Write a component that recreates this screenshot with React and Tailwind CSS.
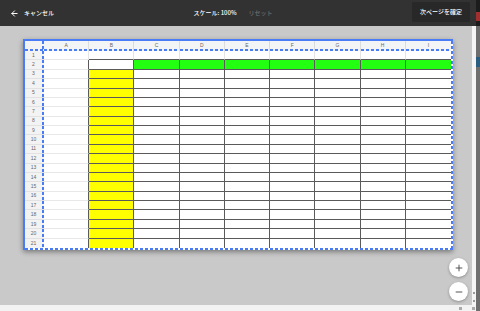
import { ArrowLeft, Plus, Minus } from 'lucide-react'

const COLS = ['A', 'B', 'C', 'D', 'E', 'F', 'G', 'H', 'I']
const ROWS = Array.from({ length: 21 }, (_, i) => i + 1)

const jp = { fontFamily: '"Noto Sans CJK JP", "Noto Sans", sans-serif' }
const small = { fontFamily: '"Liberation Sans", Arial, sans-serif' }

// blue page-break dashes, drawn as background strips
const dashH = 'bg-[image:repeating-linear-gradient(90deg,#4a7cf6_0_3px,transparent_3px_5px)] bg-[length:100%_2px] bg-bottom bg-no-repeat'
const dashV = 'bg-[image:repeating-linear-gradient(180deg,#4a7cf6_0_3px,transparent_3px_5px)] bg-[length:2px_100%] bg-right bg-no-repeat'

function cellClass(row, col) {
  // col: 0 = A, 1 = B ...
  const last = col === COLS.length - 1
  const lastRow = row === ROWS.length
  const dark = row >= 2 && col >= 1
  let cls = 'min-h-0 '
  if (row === 2 && col >= 2) cls += 'bg-[#22ff11] '
  else if (row >= 3 && col === 1) cls += 'bg-[#ffff00] '
  else cls += 'bg-white '

  if (!last) {
    if (dark || (col === 0 && row >= 2)) cls += 'border-r border-r-[#5a5a5a] '
    else cls += 'border-r border-r-[#e4e4e4] '
  }
  if (!lastRow) {
    if (dark || (row === 1 && col >= 1)) cls += 'border-b border-b-[#5a5a5a] '
    else cls += 'border-b border-b-[#e8e8e8] '
  }
  return cls
}

function Sheet() {
  return (
    <div className="h-[211px] w-[430px] border-l-2 border-t-2 border-[#4a7cf6] bg-white bg-[image:repeating-linear-gradient(180deg,#4a7cf6_0_3px,transparent_3px_5px),repeating-linear-gradient(90deg,#4a7cf6_0_3px,transparent_3px_5px)] bg-[length:2px_100%,100%_2px] bg-[position:right_top,left_bottom] bg-no-repeat pb-[2px] pr-[2px] shadow-[0_2px_5px_rgba(0,0,0,0.4)]">
      <div className="grid h-full w-full grid-cols-[19px_repeat(9,minmax(0,1fr))] grid-rows-[10px_repeat(21,minmax(0,1fr))]" style={small}>
        <div className="bg-[#f3f3f3] bg-[image:repeating-linear-gradient(90deg,#4a7cf6_0_3px,transparent_3px_5px),repeating-linear-gradient(180deg,#4a7cf6_0_3px,transparent_3px_5px)] bg-[length:100%_2px,2px_100%] bg-[position:left_bottom,right_top] bg-no-repeat" />
        {COLS.map((c, i) => (
          <div
            key={c}
            className={`flex items-center justify-center bg-[#f3f4f6] pb-[1px] text-[5px] leading-none text-[#666] ${dashH} ${i < COLS.length - 1 ? 'border-r border-r-[#dcdcdc]' : ''}`}
          >
            {c}
          </div>
        ))}
        {ROWS.map((r) => (
          <div key={r} className="contents">
            <div className={`flex items-center justify-center bg-[#f3f3f3] pr-[2px] text-[5px] leading-none text-[#666] ${dashV} ${r < ROWS.length ? 'border-b border-b-[#e2e2e2]' : ''}`}>
              {r}
            </div>
            {COLS.map((c, i) => (
              <div key={c} className={cellClass(r, i)} />
            ))}
          </div>
        ))}
      </div>
    </div>
  )
}

export default function App() {
  return (
    <div className="flex h-[311px] w-[480px] overflow-hidden bg-[#c9c9c9]">
      <div className="flex w-[476px] flex-col">
        <header className="flex h-[26px] shrink-0 items-center justify-between bg-[#323232] pl-[10px] pr-[6px] text-white" style={jp}>
          <div className="flex items-center gap-[5px]">
            <ArrowLeft size={9} strokeWidth={2.6} />
            <span className="text-[6px] font-medium leading-none">キャンセル</span>
          </div>
          <div className="flex items-center gap-[12px] text-[6px] font-medium leading-none">
            <span>スケール: 100%</span>
            <span className="text-[#6a6a6a]">リセット</span>
          </div>
          <button className="mb-[3px] flex h-[20px] items-center rounded-[2px] bg-[#282828] px-[8px] text-[6px] font-medium leading-none text-white">
            次ページを確定
          </button>
        </header>

        <div className="flex min-h-0 flex-1">
          <main className="relative flex-1 pl-[23px] pt-[13px]">
            <Sheet />
            <div className="absolute bottom-[4px] right-[4px] flex flex-col gap-[5px]">
              <button className="flex h-[19px] w-[19px] items-center justify-center rounded-full bg-white text-[#444] shadow-[0_1px_3px_rgba(0,0,0,0.3)]">
                <Plus size={10} strokeWidth={2.2} />
              </button>
              <button className="flex h-[19px] w-[19px] items-center justify-center rounded-full bg-white text-[#444] shadow-[0_1px_3px_rgba(0,0,0,0.3)]">
                <Minus size={10} strokeWidth={2.2} />
              </button>
            </div>
          </main>
          <div className="flex w-[4px] flex-col items-center justify-end gap-[6px] bg-[#f4f4f4] pb-[3px]">
            <div className="h-[2px] w-[2px] bg-[#999]" />
            <div className="h-[2px] w-[2px] bg-[#999]" />
          </div>
        </div>

        <div className="flex h-[6px] shrink-0 items-center justify-end bg-[#f2f2f2]">
          <div className="mr-[10px] h-[3px] w-[3px] bg-[#aaa]" />
          <div className="mr-[1px] h-[3px] w-[3px] bg-[#aaa]" />
        </div>
      </div>

      <div className="flex w-[4px] flex-col bg-[#6e6e6e]">
        <div className="h-[12px] bg-[#1c1c1c]" />
        <div className="h-[9px] bg-[#a03030]" />
        <div className="h-[5px] bg-[#1c1c1c]" />
        <div className="h-[31px]" />
        <div className="h-[10px] bg-[#2a5d80]" />
      </div>
    </div>
  )
}
